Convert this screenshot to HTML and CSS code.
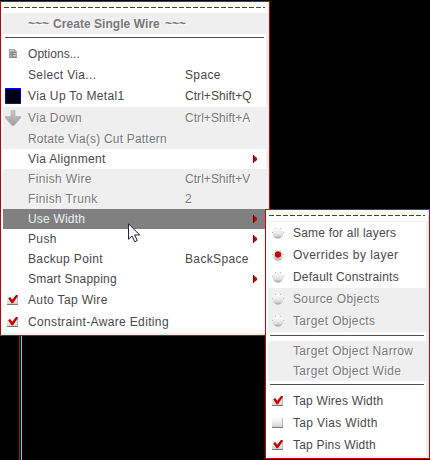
FILE: index.html
```
<!DOCTYPE html>
<html lang="en">
<head>
<meta charset="utf-8">
<title>Create Single Wire</title>
<link rel="stylesheet" href="styles.css">
</head>
<body>
<svg width="0" height="0" class="defs">
  <defs>
    <linearGradient id="btn" x1="0" y1="0" x2="0" y2="1"><stop offset="0" stop-color="#fff"/><stop offset=".4" stop-color="#f0f0f0"/><stop offset="1" stop-color="#cfcfcf"/></linearGradient>
    <linearGradient id="ball" x1="0" y1="0" x2="0" y2="1"><stop offset="0" stop-color="#fdfdfd"/><stop offset=".45" stop-color="#eee"/><stop offset=".75" stop-color="#d8d8d8"/><stop offset="1" stop-color="#999"/></linearGradient>
    <linearGradient id="arr" x1="0" y1="0" x2="0" y2="1"><stop offset="0" stop-color="#c8c8c8"/><stop offset="1" stop-color="#a0a0a0"/></linearGradient>
    <symbol id="empty" viewBox="0 0 12 12"><path fill="url(#btn)" d="M0 0h11v11H0z"/><path fill="#777" d="M0 10h11v1H0z"/><path fill="#bbb" d="M10 1h1v9h-1z"/></symbol>
    <symbol id="check" viewBox="0 0 12 12"><use href="#empty" width="12" height="12"/><path fill="#c80000" d="M1.2 4.2L3.2 3l2 2.8L9 1h1.6v1.6L6 9.2H4.5z"/></symbol>
    <symbol id="radio" viewBox="0 0 12 12"><circle cx="6" cy="6" r="5.6" fill="url(#ball)"/><path fill="#bbb" d="M0 5h1v1H0zM11 5h1v1h-1zM3 1h1v1H3zM8 1h1v1H8z"/></symbol>
    <symbol id="sub" viewBox="0 0 4 8"><path fill="#c40000" d="M0 0l4 3v2L0 8z"/><path fill="#600" d="M0 0h1v8H0z"/></symbol>
    <pattern id="dots" width="4" height="4" patternUnits="userSpaceOnUse"><path fill="#000" d="M0 0h4v4H0z"/><path fill="#00003c" d="M1 0h1v1H1zM3 2h1v1H3z"/></pattern>
  </defs>
</svg>
<main class="canvas">
  <div class="wires"></div>
  <nav class="menu main">
    <div class="tear"></div>
    <div class="title off"><span class="tilde">~~~</span><b>Create Single Wire</b><span class="tilde">~~~</span></div>
    <div class="rule"></div>
    <div class="row r21"><svg class="icon doc" viewBox="0 0 10 9" shape-rendering="crispEdges"><path fill="#aaa" d="M0 0h6v1h1v1h1v7H0z"/><path fill="#888" d="M1 3h6v1H1zM1 5h6v1H1zM3 3h1v5H3zM0 8h8v1H0z"/><path fill="#ccc" d="M1 1h4v1H1zM4 4h3v1H4zM4 6h3v1H4z"/></svg><span class="label tight">Options...</span></div>
    <div class="row r21"><span class="label">Select Via...</span><span class="key">Space</span></div>
    <div class="row r22"><svg class="icon via" viewBox="0 0 16 16"><path fill="url(#dots)" stroke="#00f" d="M.5.5h15v15H.5z"/></svg><span class="label">Via Up To Metal1</span><span class="key tight">Ctrl+Shift+Q</span></div>
    <div class="row r21 off"><svg class="icon down" viewBox="0 0 16 15"><path fill="url(#arr)" stroke="#aaa" stroke-width=".6" d="M6 0h4v6h6v1l-7 8H7L0 7V6h6z"/></svg><span class="label">Via Down</span><span class="key tight">Ctrl+Shift+A</span></div>
    <div class="row r21 off"><span class="label snug">Rotate Via(s) Cut Pattern</span></div>
    <div class="row"><span class="label">Via Alignment</span><svg class="sub"><use href="#sub"/></svg></div>
    <div class="row off"><span class="label">Finish Wire</span><span class="key tight">Ctrl+Shift+V</span></div>
    <div class="row off"><span class="label">Finish Trunk</span><span class="key">2</span></div>
    <div class="row active"><span class="label snug">Use Width</span><svg class="sub"><use href="#sub"/></svg></div>
    <div class="row"><span class="label">Push</span><svg class="sub"><use href="#sub"/></svg></div>
    <div class="row"><span class="label">Backup Point</span><span class="key">BackSpace</span></div>
    <div class="row"><span class="label snug">Smart Snapping</span><svg class="sub"><use href="#sub"/></svg></div>
    <div class="row r22"><svg class="icon box"><use href="#check"/></svg><span class="label">Auto Tap Wire</span></div>
    <div class="row r22"><svg class="icon box"><use href="#check"/></svg><span class="label">Constraint-Aware Editing</span></div>
  </nav>
  <nav class="menu popup">
    <div class="tear"></div>
    <div class="row r22"><svg class="icon box"><use href="#radio"/></svg><span class="label snug">Same for all layers</span></div>
    <div class="row r22"><svg class="icon box" viewBox="0 0 12 12"><use href="#radio" width="12" height="12"/><circle cx="6" cy="5.5" r="3.2" fill="#d00000"/></svg><span class="label wide">Overrides by layer</span></div>
    <div class="row r22"><svg class="icon box"><use href="#radio"/></svg><span class="label snug">Default Constraints</span></div>
    <div class="row r22 off"><svg class="icon box"><use href="#radio"/></svg><span class="label">Source Objects</span></div>
    <div class="row r22 off"><svg class="icon box"><use href="#radio"/></svg><span class="label">Target Objects</span></div>
    <div class="rule"></div>
    <div class="row off"><span class="label">Target Object Narrow</span></div>
    <div class="row off"><span class="label">Target Object Wide</span></div>
    <div class="rule"></div>
    <div class="row r22"><svg class="icon box"><use href="#check"/></svg><span class="label snug">Tap Wires Width</span></div>
    <div class="row r22"><svg class="icon box"><use href="#empty"/></svg><span class="label">Tap Vias Width</span></div>
    <div class="row r22"><svg class="icon box"><use href="#check"/></svg><span class="label snug">Tap Pins Width</span></div>
  </nav>
  <svg class="cursor" viewBox="0 0 13 20"><path fill="#fff" stroke="#223" d="M.5.8v15.4l3.6-3.2 2.6 5.8 2.6-1.2-2.6-5.6h5z"/></svg>
</main>
</body>
</html>
```
FILE: styles.css
```
* { box-sizing: border-box; }
body { margin: 0; background: #000; font: 12px/20px "Liberation Sans", Arial, sans-serif; color: #484848; }
.defs { position: absolute; }
.canvas { position: relative; width: 430px; height: 460px; overflow: hidden; background: #000; }
.wires { position: absolute; left: 19px; top: 336px; width: 3px; height: 124px; border-left: 1px solid #c00; border-right: 1px solid #0ff; }
.menu { position: absolute; border: 1px solid #c00; background: linear-gradient(90deg, #fff 2px, #efefef 2px); }
.main { left: 0; top: 1px; width: 270px; height: 335px; padding: 0 3px 2px 2px; }
.popup { left: 265px; top: 209px; width: 165px; height: 250px; padding: 0 3px 2px 2px; }
.tear { height: 11px; margin: 0 -2px 0 -1px; padding: 5px 3px 0 2px; background: #fff; }
.popup .tear { margin-bottom: 1px; }
.tear::before { content: ""; display: block; height: 1px; background: repeating-linear-gradient(90deg, #444 0 5px, transparent 5px 7px); }
.title { display: flex; align-items: center; height: 21px; padding-left: 25px; }
.title b { width: 107px; margin: 0 5px 0 4px; white-space: nowrap; font-size: 12px; letter-spacing: .05px; }
.tilde { width: 21px; font-weight: bold; }
.rule { height: 9px; padding: 3px 2px 0; background: #fff; }
.rule::before { content: ""; display: block; height: 1px; background: #505050; }
.row { display: flex; align-items: center; position: relative; height: 20px; padding-left: 25px; background: #fff; letter-spacing: .35px; white-space: nowrap; }
.r21 { height: 21px; }
.r22 { height: 22px; }
.off { background: #efefef; color: #777; text-shadow: 1px 1px #fff; }
.active { background: #808080; color: #e8f4f4; }
.label { width: 157px; }
.tight { letter-spacing: .05px; }
.snug { letter-spacing: .2px; }
.wide { letter-spacing: .45px; }
.icon { flex: none; }
.box { width: 12px; height: 12px; margin-left: -21px; margin-right: 9px; }
.doc { width: 10px; height: 9px; margin-left: -19px; margin-right: 9px; }
.via, .down { width: 16px; height: 16px; margin-left: -23px; margin-right: 7px; }
.sub { width: 4px; height: 8px; margin-left: 68px; }
.cursor { position: absolute; left: 128px; top: 223px; width: 13px; height: 20px; }
```
